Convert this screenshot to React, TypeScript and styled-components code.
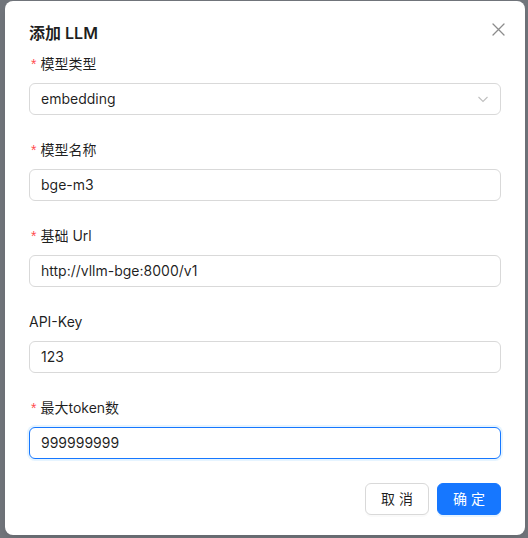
import React from "react";
import styled, { createGlobalStyle } from "styled-components";

const Global = createGlobalStyle`
  html, body { margin: 0; padding: 0; }
  body {
    background: #72767c;
    font-family: Inter, "Noto Sans CJK SC", "Noto Sans", sans-serif;
    -webkit-font-smoothing: antialiased;
  }
  * { box-sizing: border-box; }
`;

const Page = styled.div`
  width: 528px;
  height: 538px;
  padding: 1px 3px 0 5px;
  background: #72767c;
  overflow: hidden;
`;

const Modal = styled.div`
  width: 520px;
  background: #ffffff;
  border-radius: 8px;
  padding: 20px 24px 20px 24px;
  box-shadow: 0 6px 16px 0 rgba(0, 0, 0, 0.08), 0 3px 6px -4px rgba(0, 0, 0, 0.12);
  color: rgba(0, 0, 0, 0.88);
`;

const Header = styled.div`
  display: flex;
  justify-content: space-between;
  align-items: flex-start;
  margin-bottom: 8px;
`;

const Title = styled.div`
  font-size: 16px;
  font-weight: 600;
  line-height: 24px;
  color: rgba(0, 0, 0, 0.88);
`;

const CloseButton = styled.button`
  width: 22px;
  height: 22px;
  margin: -3px -8px 0 0;
  padding: 0;
  border: none;
  background: transparent;
  display: flex;
  align-items: center;
  justify-content: center;
  color: rgba(0, 0, 0, 0.45);
  cursor: pointer;
`;

const Field = styled.div`
  display: flex;
  flex-direction: column;
  margin-bottom: 24px;
`;

const Label = styled.label`
  display: flex;
  align-items: center;
  height: 22px;
  margin-bottom: 8px;
  font-size: 14px;
  line-height: 22px;
  color: rgba(0, 0, 0, 0.88);
`;

const Required = styled.span`
  color: #ff4d4f;
  font-family: SimSun, "Liberation Sans", sans-serif;
  font-size: 14px;
  line-height: 1;
  margin: 0 4px 0 2px;
`;

const InputBox = styled.div<{ $focused?: boolean }>`
  height: 32px;
  border: 1px solid ${(p) => (p.$focused ? "#1677ff" : "#d9d9d9")};
  border-radius: 6px;
  box-shadow: ${(p) => (p.$focused ? "0 0 0 2px rgba(5, 145, 255, 0.1)" : "none")};
  display: flex;
  align-items: center;
  padding: 0 11px;
  font-size: 14px;
  line-height: 22px;
  color: rgba(0, 0, 0, 0.88);
  background: #fff;
`;

const Value = styled.span`
  flex: 1;
`;

const Arrow = styled.span`
  display: flex;
  align-items: center;
  color: rgba(0, 0, 0, 0.25);
`;

const Footer = styled.div`
  display: flex;
  justify-content: flex-end;
  gap: 8px;
`;

const Button = styled.button<{ $primary?: boolean }>`
  width: 64px;
  height: 32px;
  border-radius: 6px;
  font-family: Inter, "Noto Sans CJK SC", sans-serif;
  font-size: 14px;
  line-height: 22px;
  padding: 4px 15px;
  cursor: pointer;
  border: 1px solid ${(p) => (p.$primary ? "#1677ff" : "#d9d9d9")};
  background: ${(p) => (p.$primary ? "#1677ff" : "#ffffff")};
  color: ${(p) => (p.$primary ? "#ffffff" : "rgba(0, 0, 0, 0.88)")};
  box-shadow: ${(p) =>
    p.$primary ? "0 2px 0 rgba(5, 145, 255, 0.1)" : "0 2px 0 rgba(0, 0, 0, 0.02)"};
  white-space: pre;
`;

const CloseIcon = () => (
  <svg width="13" height="13" viewBox="0 0 13 13" fill="none">
    <path d="M1 1L12 12M12 1L1 12" stroke="currentColor" strokeWidth="1.3" strokeLinecap="round" />
  </svg>
);

const DownIcon = () => (
  <svg width="12" height="12" viewBox="0 0 12 12" fill="none">
    <path d="M1.5 4L6 8.5L10.5 4" stroke="currentColor" strokeWidth="1.1" />
  </svg>
);

type FieldDef = { label: string; value: string; required: boolean; select?: boolean; focused?: boolean };

const fields: FieldDef[] = [
  { label: "模型类型", value: "embedding", required: true, select: true },
  { label: "模型名称", value: "bge-m3", required: true },
  { label: "基础 Url", value: "http://vllm-bge:8000/v1", required: true },
  { label: "API-Key", value: "123", required: false },
  { label: "最大token数", value: "999999999", required: true, focused: true },
];

export default function App() {
  return (
    <>
      <Global />
      <Page>
        <Modal>
          <Header>
            <Title>添加 LLM</Title>
            <CloseButton aria-label="close">
              <CloseIcon />
            </CloseButton>
          </Header>
          {fields.map((f) => (
            <Field key={f.label}>
              <Label>
                {f.required && <Required>*</Required>}
                {f.label}
              </Label>
              <InputBox $focused={f.focused}>
                <Value>{f.value}</Value>
                {f.select && (
                  <Arrow>
                    <DownIcon />
                  </Arrow>
                )}
              </InputBox>
            </Field>
          ))}
          <Footer>
            <Button>取 消</Button>
            <Button $primary>确 定</Button>
          </Footer>
        </Modal>
      </Page>
    </>
  );
}
